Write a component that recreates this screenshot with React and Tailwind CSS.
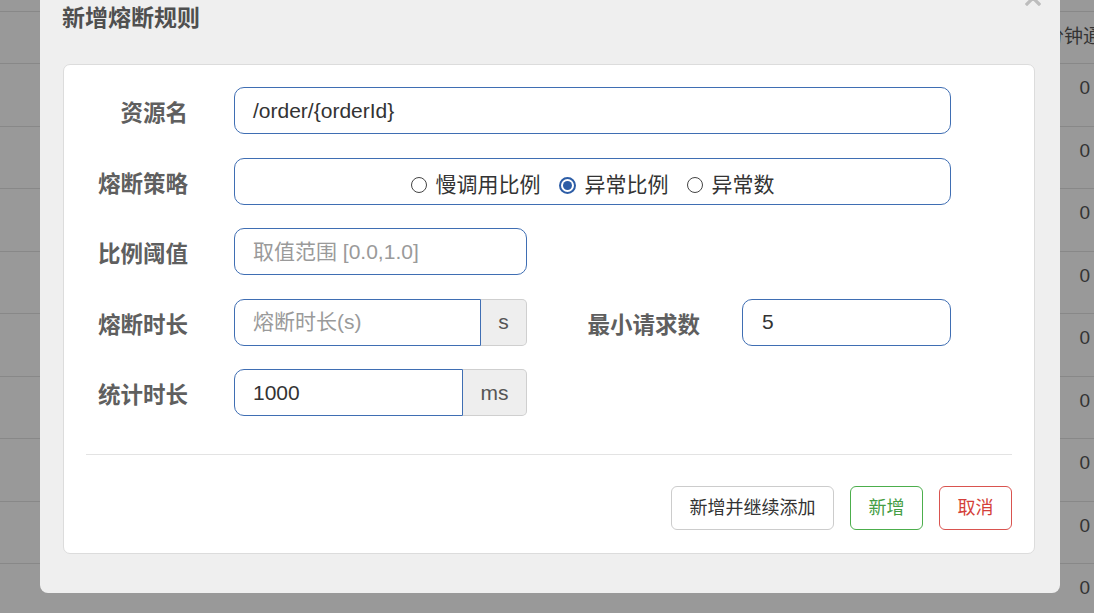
import React from "react";

const font = { fontFamily: '"Liberation Sans", "Noto Sans CJK SC", sans-serif' };

function Radio({ checked, label }) {
  return (
    <label className="flex items-center gap-[9px] text-[21px] text-[#333]">
      {checked ? (
        <span className="w-[17px] h-[17px] rounded-full border-2 border-[#2d5da6] bg-white flex items-center justify-center">
          <span className="w-[9px] h-[9px] rounded-full bg-[#2d5da6]" />
        </span>
      ) : (
        <span className="w-[16px] h-[16px] rounded-full border border-[#444] bg-white" />
      )}
      {label}
    </label>
  );
}

function Label({ children, w = "w-[124px]" }) {
  return (
    <div className={`${w} shrink-0 pt-[7px] text-right text-[22.5px] font-bold text-[#5f5f5f]`}>
      {children}
    </div>
  );
}

function Row({ children }) {
  return <div className="flex items-center h-[47px]">{children}</div>;
}

function BgRows() {
  const rows = [0, 1, 2, 3, 4, 5, 6, 7, 8];
  return (
    <div className="w-full">
      <div className="h-[11px]" />
      <div className="h-[52px] border-t border-[#888] flex items-center overflow-hidden">
        <span className="ml-[1045px] whitespace-nowrap text-[19px] text-[#333]">分钟通</span>
      </div>
      {rows.map((r) => (
        <div
          key={r}
          className="h-[62.5px] border-t border-[#888] flex items-start justify-end pt-[10px] pr-[4px] text-[19px] text-[#333]"
        >
          0
        </div>
      ))}
    </div>
  );
}

export default function App() {
  return (
    <div className="relative w-full h-[613px] bg-[#999] overflow-hidden" style={font}>
      <BgRows />

      {/* modal */}
      <div className="absolute left-[40px] top-[-20px] w-[1020px] h-[613px] bg-[#efefef] rounded-b-[8px] flex flex-col pl-[23px] pr-[25px]">
        <div className="h-[84px] shrink-0 flex items-start pt-[24px] -ml-[1px]">
          <h4 className="text-[23px] font-bold text-[#4f4f4f] leading-[28px]">新增熔断规则</h4>
        </div>
        <svg className="absolute left-[985px] top-[10px]" width="16" height="16" viewBox="0 0 16 16">
          <path d="M2 2 L14 14 M14 2 L2 14" stroke="#bdbdbd" strokeWidth="3.2" strokeLinecap="square" />
        </svg>

        <div className="w-[972px] h-[490px] bg-white border border-[#dcdcdc] rounded-[7px] pt-[22px] px-[22px] flex flex-col">
          <div className="flex flex-col gap-[23.5px] -ml-[22px]">
            <Row>
              <Label>资源名</Label>
              <div className="ml-[46px] w-[717px] h-[47px] rounded-[10px] border border-[#3f6eb3] flex items-center px-[18px] text-[21px] text-[#333]">
                /order/{"{orderId}"}
              </div>
            </Row>
            <Row>
              <Label>熔断策略</Label>
              <div className="ml-[46px] w-[717px] h-[47px] rounded-[10px] border border-[#3f6eb3] flex items-center justify-center gap-[18px] pt-[8px]">
                <Radio label="慢调用比例" />
                <Radio checked label="异常比例" />
                <Radio label="异常数" />
              </div>
            </Row>
            <Row>
              <Label>比例阈值</Label>
              <div className="ml-[46px] w-[293px] h-[47px] rounded-[10px] border border-[#3f6eb3] flex items-center px-[18px] text-[21px] text-[#9a9a9a]">
                取值范围 [0.0,1.0]
              </div>
            </Row>
            <Row>
              <Label>熔断时长</Label>
              <div className="ml-[46px] flex h-[47px]">
                <div className="w-[247px] h-full rounded-l-[10px] border border-[#3f6eb3] flex items-center px-[18px] text-[21px] text-[#9a9a9a]">
                  熔断时长(s)
                </div>
                <div className="w-[46px] h-full rounded-r-[5px] border border-l-0 border-[#cfcfcf] bg-[#eee] flex items-center justify-center text-[21px] text-[#555]">
                  s
                </div>
              </div>
              <Label w="w-[173px]">最小请求数</Label>
              <div className="ml-[42px] w-[209px] h-[47px] rounded-[10px] border border-[#3f6eb3] flex items-center px-[19px] text-[21px] text-[#333]">
                5
              </div>
            </Row>
            <Row>
              <Label>统计时长</Label>
              <div className="ml-[46px] flex h-[47px]">
                <div className="w-[229px] h-full rounded-l-[10px] border border-[#3f6eb3] flex items-center px-[18px] text-[21px] text-[#333]">
                  1000
                </div>
                <div className="w-[64px] h-full rounded-r-[5px] border border-l-0 border-[#cfcfcf] bg-[#eee] flex items-center justify-center text-[21px] text-[#555]">
                  ms
                </div>
              </div>
            </Row>
          </div>

          <div className="mt-[38px] border-t border-[#e3e3e3]" />

          <div className="mt-[31px] flex justify-end gap-[16px]">
            <button className="w-[163px] h-[44px] rounded-[6px] border border-[#ccc] bg-white text-[18px] text-[#333]">
              新增并继续添加
            </button>
            <button className="w-[73px] h-[44px] rounded-[6px] border border-[#4cae4c] bg-white text-[18px] text-[#449d44]">
              新增
            </button>
            <button className="w-[73px] h-[44px] rounded-[6px] border border-[#d9534f] bg-white text-[18px] text-[#d43f3a]">
              取消
            </button>
          </div>
        </div>
      </div>
    </div>
  );
}
